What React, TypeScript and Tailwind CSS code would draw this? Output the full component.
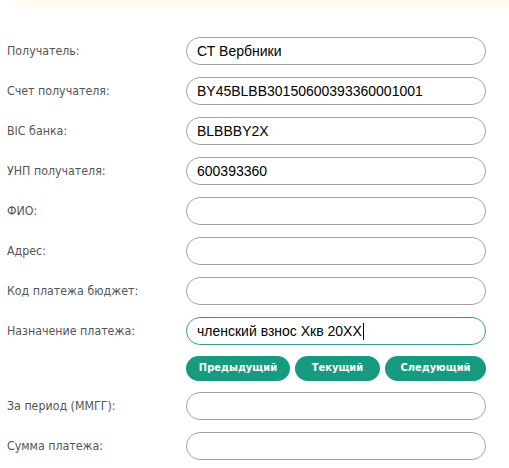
import React from 'react';

const rows: { label: string; value: string }[] = [
  { label: 'Получатель:', value: 'СТ Вербники' },
  { label: 'Счет получателя:', value: 'BY45BLBB30150600393360001001' },
  { label: 'BIC банка:', value: 'BLBBBY2X' },
  { label: 'УНП получателя:', value: '600393360' },
  { label: 'ФИО:', value: '' },
  { label: 'Адрес:', value: '' },
  { label: 'Код платежа бюджет:', value: '' },
];

const labelCls =
  "w-[179px] shrink-0 text-[12.3px] text-[#555555] [font-family:'DejaVu_Sans_Condensed','DejaVu_Sans',sans-serif]";
const inputCls =
  "h-[28px] w-[300px] rounded-full border border-[#a3a3a3] bg-white px-[10px] text-[14px] text-black outline-none [font-family:'Liberation_Sans',Arial,sans-serif]";

function Row({ label, value }: { label: string; value: string }) {
  return (
    <div className="flex items-center">
      <span className={labelCls}>{label}</span>
      <input className={inputCls} value={value} readOnly />
    </div>
  );
}

export default function App() {
  return (
    <div className="min-h-[468px] w-[509px] bg-white">
      <div className="ml-[15px] h-[8px] bg-[#fffcef]" />
      <div className="flex flex-col gap-[12px] pl-[7px] pt-[29px]">
        {rows.map((r) => (
          <Row key={r.label} {...r} />
        ))}
        <div className="flex items-center">
          <span className={labelCls}>Назначение платежа:</span>
          <div className="flex h-[28px] w-[300px] items-center rounded-full border border-[#2f9e8b] bg-white px-[10px] text-[14px] text-black [font-family:'Liberation_Sans',Arial,sans-serif]">
            членский взнос Хкв 20ХХ
            <span className="ml-px inline-block h-[17px] w-px bg-black" />
          </div>
        </div>
        <div className="-my-[1px] flex gap-[5px] pl-[179px]">
          {['Предыдущий', 'Текущий', 'Следующий'].map((b, i) => (
            <button
              key={b}
              type="button"
              className={`h-[25px] rounded-full bg-[#179a7f] text-[11px] font-bold text-white [font-family:'DejaVu_Sans_Condensed','DejaVu_Sans',sans-serif] ${
                i === 0 ? 'w-[104px]' : i === 1 ? 'w-[85px]' : 'w-[101px]'
              }`}
            >
              {b}
            </button>
          ))}
        </div>
        <Row label="За период (ММГГ):" value="" />
        <Row label="Сумма платежа:" value="" />
      </div>
    </div>
  );
}
